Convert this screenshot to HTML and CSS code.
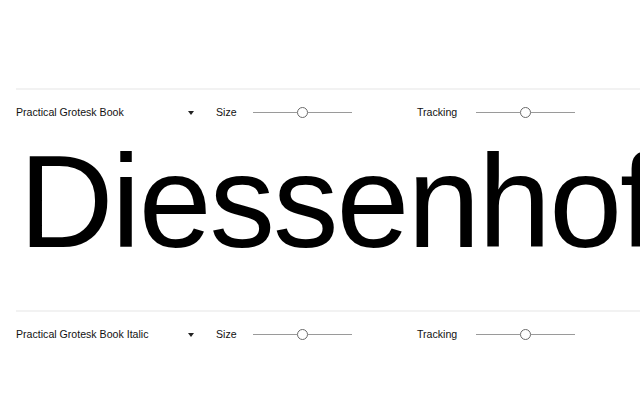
FILE: index.html
```html
<!DOCTYPE html>
<html lang="en">
<head>
<meta charset="utf-8">
<title>Type tester</title>
<link rel="stylesheet" href="styles.css">
</head>
<body>
<main class="tester">
  <section class="specimen">
    <div class="controls">
      <div class="font-select">
        <span class="font-name">Practical Grotesk Book</span>
        <span class="caret"></span>
      </div>
      <div class="ctrl">
        <span class="label label-size">Size</span>
        <div class="slider"><span class="track"></span><span class="thumb"></span><span class="track"></span></div>
      </div>
      <div class="ctrl ctrl-tracking">
        <span class="label label-tracking">Tracking</span>
        <div class="slider"><span class="track"></span><span class="thumb"></span><span class="track"></span></div>
      </div>
    </div>
    <div class="sample">Diessenhof</div>
  </section>
  <section class="specimen">
    <div class="controls">
      <div class="font-select">
        <span class="font-name">Practical Grotesk Book Italic</span>
        <span class="caret"></span>
      </div>
      <div class="ctrl">
        <span class="label label-size">Size</span>
        <div class="slider"><span class="track"></span><span class="thumb"></span><span class="track"></span></div>
      </div>
      <div class="ctrl ctrl-tracking">
        <span class="label label-tracking">Tracking</span>
        <div class="slider"><span class="track"></span><span class="thumb"></span><span class="track"></span></div>
      </div>
    </div>
  </section>
</main>
</body>
</html>
```
FILE: styles.css
```css
html, body {
  margin: 0;
  padding: 0;
  background: #ffffff;
  overflow: hidden;
}
body {
  font-family: "Liberation Sans", Arial, sans-serif;
  color: #111111;
  width: 640px;
  height: 400px;
}
.tester {
  padding-top: 88px;
}
.specimen {
  margin-left: 16px;
  border-top: 2px solid #f2f2f2;
}
.controls {
  height: 44px;
  display: flex;
  align-items: center;
  font-size: 10.6px;
}
.font-select {
  width: 178px;
  display: flex;
  align-items: center;
  justify-content: space-between;
  margin-right: 22px;
}
.caret {
  width: 0;
  height: 0;
  border-left: 3px solid transparent;
  border-right: 3px solid transparent;
  border-top: 4px solid #222222;
  margin-top: 2px;
}
.ctrl {
  display: flex;
  align-items: center;
}
.ctrl-tracking {
  margin-left: 65px;
}
.label-size {
  width: 37px;
}
.label-tracking {
  width: 59px;
}
.slider {
  width: 99px;
  height: 12px;
  display: flex;
  align-items: center;
}
.track {
  flex: 1;
  height: 1px;
  background: #9a9a9a;
}
.thumb {
  width: 9px;
  height: 9px;
  border: 1px solid #6a6a6a;
  border-radius: 50%;
  background: #ffffff;
}
.sample {
  font-size: 131px;
  line-height: 136px;
  letter-spacing: -2px;
  color: #000000;
  white-space: nowrap;
  margin-left: 3px;
  padding-bottom: 40px;
}
```
